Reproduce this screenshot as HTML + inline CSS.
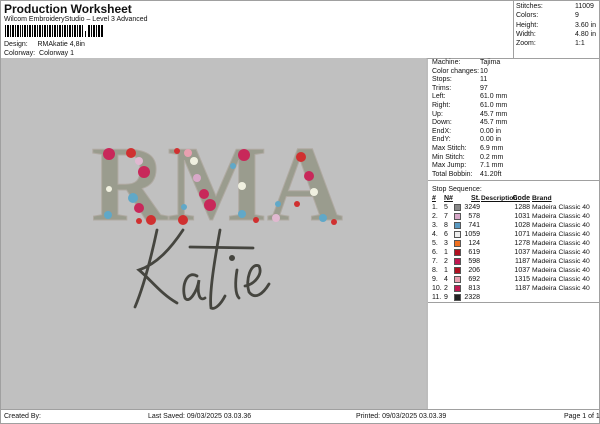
<!DOCTYPE html><html><head><style>
body{margin:0;width:600px;height:424px;background:#fff;font-family:"Liberation Sans",sans-serif;font-size:7px;color:#111;position:relative;overflow:hidden}
.a{position:absolute;white-space:nowrap}
.box{position:absolute;border:1px solid #a0a0a0;box-sizing:border-box}
.col{position:absolute;white-space:nowrap;line-height:9px;top:194px}
.r{text-align:right}
.sw{width:5px;height:5px;border:1px solid #555;margin:1px 0 2px}
</style></head><body>
<div class="box" style="left:0;top:0;width:600px;height:424px"></div>
<div class="a" style="left:4px;top:2px;font-size:12px;font-weight:bold">Production Worksheet</div>
<div class="a" style="left:4px;top:16px">Wilcom EmbroideryStudio – Level 3 Advanced</div>
<svg class="a" style="left:5px;top:25px" width="100" height="14">
<g fill="#000">
<rect x="0" y="0" width="1" height="12"/><rect x="2" y="0" width="2" height="12"/><rect x="5" y="0" width="1" height="12"/><rect x="7" y="0" width="2" height="12"/><rect x="10" y="0" width="1" height="12"/><rect x="12" y="0" width="2" height="12"/><rect x="15" y="0" width="1" height="12"/><rect x="17" y="0" width="1" height="12"/><rect x="19" y="0" width="2" height="12"/><rect x="22" y="0" width="1" height="12"/><rect x="24" y="0" width="2" height="12"/><rect x="27" y="0" width="1" height="12"/><rect x="29" y="0" width="2" height="12"/><rect x="32" y="0" width="1" height="12"/><rect x="34" y="0" width="2" height="12"/><rect x="37" y="0" width="1" height="12"/><rect x="39" y="0" width="2" height="12"/><rect x="42" y="0" width="1" height="12"/><rect x="44" y="0" width="2" height="12"/><rect x="47" y="0" width="1" height="12"/><rect x="49" y="0" width="2" height="12"/><rect x="52" y="0" width="1" height="12"/><rect x="54" y="0" width="2" height="12"/><rect x="57" y="0" width="1" height="12"/><rect x="59" y="0" width="2" height="12"/><rect x="62" y="0" width="1" height="12"/><rect x="64" y="0" width="2" height="12"/><rect x="67" y="0" width="1" height="12"/><rect x="69" y="0" width="2" height="12"/><rect x="72" y="0" width="1" height="12"/><rect x="74" y="0" width="2" height="12"/><rect x="77" y="0" width="1" height="12"/><rect x="80" y="6" width="1" height="6"/><rect x="83" y="0" width="2" height="12"/><rect x="86" y="0" width="1" height="12"/><rect x="88" y="0" width="2" height="12"/><rect x="91" y="0" width="1" height="12"/><rect x="93" y="0" width="2" height="12"/><rect x="96" y="0" width="2" height="12"/>
</g></svg>
<div class="a" style="left:4px;top:41px">Design:&nbsp;&nbsp;&nbsp;&nbsp; RMAkatie 4,8in</div>
<div class="a" style="left:4px;top:50px">Colorway:&nbsp; Colorway 1</div>
<div class="box" style="left:513px;top:0;width:87px;height:59px"></div>
<div class="a" style="left:516px;top:2px;line-height:9.3px">Stitches:<br>Colors:<br>Height:<br>Width:<br>Zoom:</div>
<div class="a" style="left:575px;top:2px;line-height:9.3px">11009<br>9<br>3.60 in<br>4.80 in<br>1:1</div>
<div class="a" style="left:1px;top:58px;width:426px;height:351px;background:#c0c0c0"></div>
<div class="box" style="left:426px;top:58px;width:174px;height:352px;border-left:2px solid #bdbdbd"></div>
<div class="a" style="left:432px;top:59px;line-height:8.6px">Machine:<br>Color changes:<br>Stops:<br>Trims:<br>Left:<br>Right:<br>Up:<br>Down:<br>EndX:<br>EndY:<br>Max Stitch:<br>Min Stitch:<br>Max Jump:<br>Total Bobbin:</div>
<div class="a" style="left:480px;top:59px;line-height:8.6px">Tajima<br>10<br>11<br>97<br>61.0 mm<br>61.0 mm<br>45.7 mm<br>45.7 mm<br>0.00 in<br>0.00 in<br>6.9 mm<br>0.2 mm<br>7.1 mm<br>41.20ft</div>
<div class="a" style="left:428px;top:180px;width:171px;border-top:1px solid #a0a0a0"></div>
<div class="a" style="left:432px;top:186px">Stop Sequence:</div>
<div class="col" style="left:432px"><b><u>#</u></b><br>1.<br>2.<br>3.<br>4.<br>5.<br>6.<br>7.<br>8.<br>9.<br>10.<br>11.</div>
<div class="col" style="left:444px"><b><u>N#</u></b><br>5<br>7<br>8<br>6<br>3<br>1<br>2<br>1<br>4<br>2<br>9</div>
<div class="col" style="left:454px;top:203px">
<div class="sw" style="background:#888"></div><div class="sw" style="background:#d7a8c8"></div><div class="sw" style="background:#5b9ac2"></div><div class="sw" style="background:#eee"></div><div class="sw" style="background:#f07020"></div><div class="sw" style="background:#b01020"></div><div class="sw" style="background:#c01850"></div><div class="sw" style="background:#b01020"></div><div class="sw" style="background:#e8a0b0"></div><div class="sw" style="background:#c01850"></div><div class="sw" style="background:#222"></div></div>
<div class="col r" style="left:455px;width:25px"><b><u>St.</u></b><br>3249<br>578<br>741<br>1059<br>124<br>619<br>598<br>206<br>692<br>813<br>2328</div>
<div class="col" style="left:481px;font-size:6.6px"><b><u>Description</u></b></div>
<div class="col r" style="left:500px;width:30px"><b><u>Code</u></b><br>1288<br>1031<br>1028<br>1071<br>1278<br>1037<br>1187<br>1037<br>1315<br>1187</div>
<div class="col" style="left:532px;font-size:6.8px"><b><u>Brand</u></b><br>Madeira Classic 40<br>Madeira Classic 40<br>Madeira Classic 40<br>Madeira Classic 40<br>Madeira Classic 40<br>Madeira Classic 40<br>Madeira Classic 40<br>Madeira Classic 40<br>Madeira Classic 40<br>Madeira Classic 40</div>
<div class="a" style="left:428px;top:302px;width:171px;border-top:1px solid #a0a0a0"></div>
<div class="a" style="left:0;top:409px;width:600px;border-top:1px solid #a0a0a0"></div>
<div class="a" style="left:4px;top:413px">Created By:</div>
<div class="a" style="left:148px;top:413px">Last Saved: 09/03/2025 03.03.36</div>
<div class="a" style="left:356px;top:413px">Printed: 09/03/2025 03.03.39</div>
<div class="a" style="left:564px;top:413px">Page 1 of 1</div>
<svg class="a" style="left:1px;top:58px" width="426" height="351">
<text x="90" y="162" font-family="Liberation Serif" font-weight="bold" font-size="108" fill="#9a9c8e" textLength="252" lengthAdjust="spacingAndGlyphs" stroke="#b0aaa2" stroke-width="1">RMA</text>
<g>
<circle cx="108" cy="96" r="6" fill="#c8285a"/><circle cx="130" cy="95" r="5" fill="#d03030"/><circle cx="138" cy="103" r="4" fill="#e0b8d0"/><circle cx="143" cy="114" r="6" fill="#c8285a"/><circle cx="108" cy="131" r="3" fill="#f0f0e0"/><circle cx="132" cy="140" r="5" fill="#60a8c8"/><circle cx="138" cy="150" r="5" fill="#c8285a"/><circle cx="150" cy="162" r="5" fill="#d03030"/><circle cx="107" cy="157" r="4" fill="#60a8c8"/>
<circle cx="138" cy="163" r="3" fill="#d03030"/><circle cx="176" cy="93" r="3" fill="#d03030"/><circle cx="187" cy="95" r="4" fill="#e8a0b0"/><circle cx="193" cy="103" r="4" fill="#f0f0e0"/><circle cx="196" cy="120" r="4" fill="#d8a8c8"/><circle cx="203" cy="136" r="5" fill="#c8285a"/><circle cx="209" cy="147" r="6" fill="#c8285a"/><circle cx="182" cy="162" r="5" fill="#d03030"/><circle cx="183" cy="149" r="3" fill="#60a8c8"/><circle cx="243" cy="97" r="6" fill="#c8285a"/><circle cx="232" cy="108" r="3" fill="#60a8c8"/><circle cx="241" cy="128" r="4" fill="#f0f0e0"/><circle cx="241" cy="156" r="4" fill="#60a8c8"/><circle cx="255" cy="162" r="3" fill="#d03030"/><circle cx="300" cy="99" r="5" fill="#d03030"/><circle cx="308" cy="118" r="5" fill="#c8285a"/><circle cx="313" cy="134" r="4" fill="#f0f0e0"/><circle cx="296" cy="146" r="3" fill="#d03030"/><circle cx="277" cy="146" r="3" fill="#60a8c8"/><circle cx="275" cy="160" r="4" fill="#e0b8d0"/><circle cx="322" cy="160" r="4" fill="#60a8c8"/><circle cx="333" cy="164" r="3" fill="#d03030"/>
</g>
<g fill="none" stroke="#45453f" stroke-width="2.8" stroke-linecap="round">
<path d="M156 172 C150 200 142 230 134 249"/>
<path d="M182 172 C170 190 156 206 138 212 C150 222 160 236 176 245"/>
<path d="M196 218 C186 212 180 228 184 240 C188 246 196 234 198 222 C196 234 198 244 204 240"/>
<path d="M219 172 C214 200 208 235 210 250 C214 252 220 246 224 238"/>
<path d="M189 189 L252 190"/>
<path d="M236 212 C234 224 234 236 238 240"/>
<circle cx="231" cy="200" r="1.6" fill="#45453f"/>
<path d="M244 228 C254 226 262 216 258 208 C250 204 244 222 248 234 C254 242 262 236 268 226"/>
</g>
</svg>
</body></html>
